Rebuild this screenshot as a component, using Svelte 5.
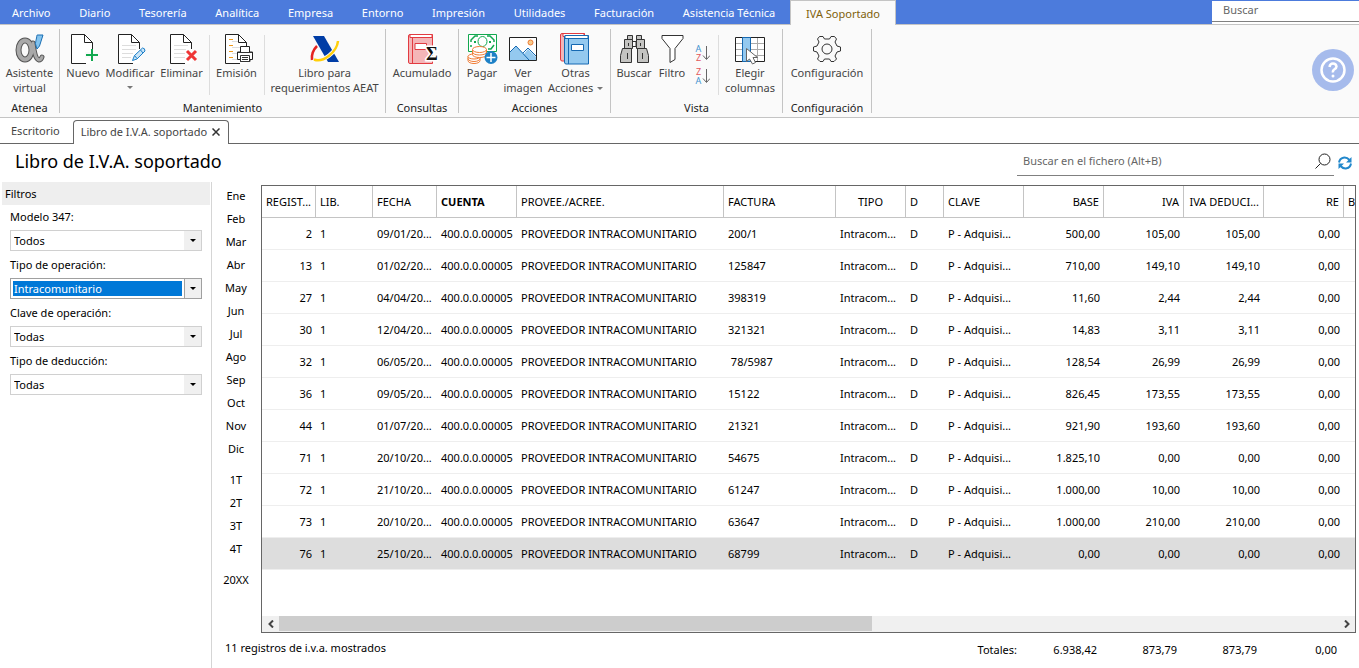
<script lang="ts">
  const menu = [
    "Archivo", "Diario", "Tesorería", "Analítica", "Empresa", "Entorno",
    "Impresión", "Utilidades", "Facturación", "Asistencia Técnica", "IVA Soportado",
  ];
  let activeMenu = $state("IVA Soportado");

  const months = ["Ene", "Feb", "Mar", "Abr", "May", "Jun", "Jul", "Ago", "Sep", "Oct", "Nov", "Dic"];
  const quarters = ["1T", "2T", "3T", "4T"];

  const filters = [
    { id: "modelo", label: "Modelo 347:", value: "Todos" },
    { id: "operacion", label: "Tipo de operación:", value: "Intracomunitario" },
    { id: "clave", label: "Clave de operación:", value: "Todas" },
    { id: "deduccion", label: "Tipo de deducción:", value: "Todas" },
  ];
  let activeFilter = $state("operacion");

  const columns = [
    { name: "REGIST...", cls: "c-reg" },
    { name: "LIB.", cls: "c-lib" },
    { name: "FECHA", cls: "c-fecha" },
    { name: "CUENTA", cls: "c-cuenta" },
    { name: "PROVEE./ACREE.", cls: "c-prov" },
    { name: "FACTURA", cls: "c-fact" },
    { name: "TIPO", cls: "c-tipo" },
    { name: "D", cls: "c-d" },
    { name: "CLAVE", cls: "c-num" },
    { name: "BASE", cls: "c-num right" },
    { name: "IVA", cls: "c-num right" },
    { name: "IVA DEDUCI...", cls: "c-num right" },
    { name: "RE", cls: "c-num right" },
    { name: "B", cls: "c-last" },
  ];

  const records = [
    { reg: 2, date: "09/01/20...", invoice: "200/1", base: "500,00", iva: "105,00" },
    { reg: 13, date: "01/02/20...", invoice: "125847", base: "710,00", iva: "149,10" },
    { reg: 27, date: "04/04/20...", invoice: "398319", base: "11,60", iva: "2,44" },
    { reg: 30, date: "12/04/20...", invoice: "321321", base: "14,83", iva: "3,11" },
    { reg: 32, date: "06/05/20...", invoice: " 78/5987", base: "128,54", iva: "26,99" },
    { reg: 36, date: "09/05/20...", invoice: "15122", base: "826,45", iva: "173,55" },
    { reg: 44, date: "01/07/20...", invoice: "21321", base: "921,90", iva: "193,60" },
    { reg: 71, date: "20/10/20...", invoice: "54675", base: "1.825,10", iva: "0,00" },
    { reg: 72, date: "21/10/20...", invoice: "61247", base: "1.000,00", iva: "10,00" },
    { reg: 73, date: "20/10/20...", invoice: "63647", base: "1.000,00", iva: "210,00" },
    { reg: 76, date: "25/10/20...", invoice: "68799", base: "0,00", iva: "0,00" },
  ];
  let selected = $state(76);
</script>

{#snippet page()}
  <path d="M4 1.5h15l7 7V30.500H4.500V1.500" fill="#fff" stroke="none" />
  <path d="M25.500 16V9.500L17.500 1.500H4.500V30.500H19M17.500 1.500V9.500H25.500" fill="none" stroke="#222" />
{/snippet}

<div class="app">
  <header class="menubar">
    <nav>
      {#each menu as item}
        <button class:active={activeMenu === item} onclick={() => (activeMenu = item)}>{item}</button>
      {/each}
    </nav>
    <input class="global-search" type="search" aria-label="Buscar" placeholder="Buscar" />
  </header>

  <div class="ribbon">
    <section class="group g-atenea">
      <div class="tools">
        <button class="tool">
          <svg viewBox="0 0 32 32" fill="none" stroke-linecap="round">
            <ellipse cx="11" cy="17" rx="6.500" ry="9.500" stroke="#555" stroke-width="6" />
            <path d="M19 10C20 17 21 26 25 27Q27 27 28 24" stroke="#555" stroke-width="5" />
            <ellipse cx="11" cy="17" rx="6.500" ry="9.500" stroke="#a9a9a9" stroke-width="4" />
            <path d="M19 10C20 17 21 26 25 27Q27 27 28 24" stroke="#a9a9a9" stroke-width="3" />
            <path d="M23.500 2h5.500l-3.500 11-2.500 3-1.500-5z" fill="#83c3ee" stroke="#1b6fb3" />
          </svg>
          <span>Asistente<br />virtual</span>
        </button>
      </div>
      <h2>Atenea</h2>
    </section>

    <section class="group g-mant">
      <div class="tools">
        <button class="tool">
          <svg viewBox="0 0 32 32">
            {@render page()}
            <path d="M18 19h14v6H18z" fill="#fafafa" />
            <path d="M25 16v12M19 22h12" stroke="#12a84f" stroke-width="2" />
          </svg>
          <span>Nuevo</span>
        </button>
        <button class="tool">
          <svg viewBox="0 0 32 32">
            {@render page()}
            <path d="M8 12.500h14M8 16.500h14M8 20.500h11M8 24.500h9" stroke="#ddd" />
            <path d="M18.500 27.500l2-5 8-7.500q2.500 0 2.500 3l-8 8zM20.500 22.500l2.500 3M26.500 17l2.500 3" fill="#c9e4f7" stroke="#1b7fc9" />
          </svg>
          <span>Modificar</span>
          <i class="caret"></i>
        </button>
        <button class="tool">
          <svg viewBox="0 0 32 32">
            {@render page()}
            <path d="M8 12.500h14M8 16.500h12M8 20.500h11M8 24.500h11" stroke="#ddd" />
            <path d="M21 18l9 9M30 18l-9 9" stroke="#fafafa" stroke-width="5" />
            <path d="M21 18l9 9M30 18l-9 9" stroke="#ef3535" stroke-width="3" />
          </svg>
          <span>Eliminar</span>
        </button>
        <button class="tool divided">
          <svg viewBox="0 0 32 32">
            {@render page()}
            <path d="M8 6.500h4M8 12.500h4M8 18.500h4M8 24.500h4" stroke="#f09a1a" />
            <path d="M11 8.500h6M11 14.500h8M11 20.500h5M11 26.500h5" stroke="#ddd" />
            <path d="M19.500 19v-5.500h9V19h3v7.500H29v2H19.500v-2h-3V19z" fill="#fff" stroke="#222" />
            <path d="M17 19.500h14M19.500 22.500h9v6h-9zM21 24.500h6M21 26.500h6" fill="#fff" stroke="#333" />
          </svg>
          <span>Emisión</span>
        </button>
        <button class="tool divided">
          <svg viewBox="0 0 32 32">
            <path d="M8 13Q2 19 3 27" fill="none" stroke="#e42320" stroke-width="2.500" />
            <path d="M4 3h11l15 26H19z" fill="#003da6" />
            <path d="M29 8C28 19 14 30 5 26.500" fill="none" stroke="#fafafa" stroke-width="4" />
            <path d="M29 8C28 19 14 30 5 26.500" fill="none" stroke="#ffcf0a" stroke-width="2.500" />
          </svg>
          <span>Libro para<br />requerimientos AEAT</span>
        </button>
      </div>
      <h2>Mantenimiento</h2>
    </section>

    <section class="group g-cons">
      <div class="tools">
        <button class="tool">
          <svg viewBox="0 0 32 32">
            <path d="M2.500 3Q2.500 1.500 4 1.500H26.500V30.500H4Q2.500 30.500 2.500 29z" fill="#f4b6b8" stroke="#e23b41" />
            <path d="M4 1.500h22v3H4z" fill="#fff" stroke="#e23b41" />
            <path d="M6.500 5v25" stroke="#e23b41" />
            <path d="M9 10.500h11.500v6H9z" fill="#fff" stroke="#e23b41" />
            <text x="20" y="27" font-family="Liberation Serif" font-size="18" font-weight="bold" fill="#111" stroke="#fff" stroke-width="3" paint-order="stroke">Σ</text>
          </svg>
          <span>Acumulado</span>
        </button>
      </div>
      <h2>Consultas</h2>
    </section>

    <section class="group g-acc">
      <div class="tools">
        <button class="tool">
          <svg viewBox="0 0 32 32">
            <path d="M2.500 1.500h28v17h-28z" fill="#fff" stroke="#12a84f" />
            <path d="M5 9V7l4-4h3M28 9V7l-4-4h-3M28 12l-3 4h-3M5 12v2" fill="none" stroke="#12a84f" stroke-width="1.500" />
            <ellipse cx="16.500" cy="8.500" rx="4.500" ry="5" fill="#fff" stroke="#12a84f" />
            <path d="M8 9h2M23 9h2" stroke="#12a84f" stroke-width="2" />
            <g fill="#fff" stroke="#ef7a33">
              <path d="M2 23.500v4c0 4 12 4 12 0v-4" />
              <ellipse cx="8" cy="23.500" rx="6" ry="2.500" />
              <path d="M2 25.500c0 4 12 4 12 0" fill="none" />
              <path d="M6.500 16.500v5c0 4 14 4 14 0v-5" />
              <ellipse cx="13.500" cy="16.500" rx="7" ry="3" />
              <path d="M6.500 19c0 4 14 4 14 0" fill="none" />
            </g>
            <circle cx="25" cy="24.500" r="6.500" fill="#1d80c6" />
            <path d="M25 20v9M20.500 24.500h9" stroke="#fff" stroke-width="1.500" />
          </svg>
          <span>Pagar</span>
        </button>
        <button class="tool">
          <svg viewBox="0 0 32 32">
            <path d="M2.500 4.500h27v23h-27z" fill="#fff" />
            <path d="M3 19l6-6 8 8 4-5 8 8v3H3z" fill="#94c9ef" />
            <path d="M3 19l6-6 13 14M16 20l5-5 8 8" fill="none" stroke="#1669b2" />
            <path d="M2.500 4.500h27v23h-27z" fill="none" stroke="#222" />
            <circle cx="23.500" cy="9.500" r="2.500" fill="#f8cc8c" stroke="#ef7a33" />
          </svg>
          <span>Ver<br />imagen</span>
        </button>
        <button class="tool">
          <svg viewBox="0 0 32 32">
            <path d="M.500 2Q.500.500 2 .500H24.500V28H2Q.500 28 .500 26z" fill="#f4b6b8" stroke="#e23b41" />
            <path d="M3 .500h21v3H3z" fill="#fff" stroke="#e23b41" />
            <path d="M4.500 4Q4.500 2.500 6 2.500H28.500V31H6Q4.500 31 4.500 29z" fill="#94c9ef" stroke="#1669b2" />
            <path d="M5 2.500h23v3H5z" fill="#fff" stroke="#1669b2" />
            <path d="M8.500 6v25" stroke="#1669b2" />
            <path d="M11.500 11.500h12v6h-12z" fill="#fff" stroke="#1669b2" />
          </svg>
          <span>Otras<br />Acciones <i class="caret inline"></i></span>
        </button>
      </div>
      <h2>Acciones</h2>
    </section>

    <section class="group g-vista">
      <div class="tools">
        <button class="tool">
          <svg viewBox="0 0 32 32" fill="#c4c4c2" stroke="#333">
            <path d="M14 8.500h4v5h-4z" fill="#fff" />
            <path d="M9.500 2.500h5v4h-5zM18.500 2.500h5v4h-5z" />
            <path d="M6.500 6.500h8v9h-8zM18.500 6.500h8v9h-8z" />
            <path d="M4.500 15.500h9v14h-11v-7zM19.500 15.500h9l2 7v7h-11z" />
            <path d="M9.500 20v6M24.500 20v6M10.500 10v3M22.500 10v3" />
          </svg>
          <span>Buscar</span>
        </button>
        <button class="tool">
          <svg viewBox="0 0 32 32">
            <path d="M6 2.500h21v3l-8 10v11l-5 3v-14l-8-10z" fill="#fff" stroke="#333" />
          </svg>
          <span>Filtro</span>
        </button>
        <div class="sorts">
          {#each [["A", "Z"], ["Z", "A"]] as [top, bottom]}
            <button aria-label="Ordenar {top}-{bottom}">
              <span class="letters"><b class={top}>{top}</b><b class={bottom}>{bottom}</b></span>
              <svg viewBox="0 0 8 16"><path d="M4.500 1v13M1 10.500l3.500 4 3.500-4" fill="none" stroke="#666" /></svg>
            </button>
          {/each}
        </div>
        <button class="tool divided">
          <svg viewBox="0 0 32 32">
            <path d="M1.500 4.500h29v24h-29z" fill="#fff" />
            <path d="M1 10.500h30M1 16.500h30M1 22.500h30M23.500 4v25" stroke="#aaa" />
            <path d="M1.500 4.500h29v24h-29z" fill="none" stroke="#222" />
            <path d="M8.500 4.500h8v24h-8z" fill="#94c9ef" stroke="#1669b2" />
            <path d="M12.500 15.500v13l3-2.500 3 5 3-1.500-2.500-5h4.500z" fill="#fff" stroke="#666" />
          </svg>
          <span>Elegir<br />columnas</span>
        </button>
      </div>
      <h2>Vista</h2>
    </section>

    <section class="group g-conf">
      <div class="tools">
        <button class="tool">
          <svg viewBox="0 0 32 32" fill="none" stroke="#333" stroke-linejoin="round">
            <path d="M8.500 3.500L12 3.500L13.500 6H18.500L20 3.500L23.500 3.500L25.500 6L24 9L26 13L29.500 14V18L26 19L24 23L25.500 26L23 28.500H20L18.500 26H13.500L12 28.500H9L6.500 26L8 23L6 19L2.500 18V14L6 13L8 9L6.500 6z" />
            <circle cx="16" cy="16" r="5" />
          </svg>
          <span>Configuración</span>
        </button>
      </div>
      <h2>Configuración</h2>
    </section>

    <button class="help" aria-label="Ayuda">
      <svg viewBox="0 0 42 42">
        <circle cx="21" cy="21" r="21" fill="#a6bbec" />
        <circle cx="21" cy="21" r="11.500" fill="none" stroke="#fff" stroke-width="2.500" />
        <path d="M17.500 18q.500-3.500 3.500-3.500t3.500 3q0 1.500-2 2.700T21 23.500" fill="none" stroke="#fff" stroke-width="2.500" />
        <circle cx="21" cy="27" r="1.500" fill="#fff" />
      </svg>
    </button>
  </div>

  <div class="doc-tabs">
    <button class="doc-tab">Escritorio</button>
    <div class="doc-tab current">
      <span>Libro de I.V.A. soportado</span>
      <button aria-label="Cerrar">
        <svg viewBox="0 0 8 8"><path d="M.500.500l7 7M7.500.500l-7 7" stroke="#333" stroke-width="1.500" /></svg>
      </button>
    </div>
  </div>

  <div class="title-bar">
    <h1>Libro de I.V.A. soportado</h1>
    <div class="file-search">
      <input type="text" aria-label="Buscar en el fichero" placeholder="Buscar en el fichero (Alt+B)" />
      <svg viewBox="0 0 16 16" fill="none" stroke="#222"><circle cx="9.500" cy="6.500" r="5.500" /><path d="M5.500 10.500L.500 15.500" /></svg>
    </div>
    <button class="refresh" aria-label="Actualizar">
      <svg viewBox="0 0 14 14">
        <path d="M1 6.500C2 1 8 0 11.500 4M13 7.500C12 13 6 14 2.500 10" fill="none" stroke="#2288cc" stroke-width="2" />
        <path d="M13.500 1v5.500H8zM.500 13V7.500H6z" fill="#2288cc" />
      </svg>
    </button>
  </div>

  <main>
    <aside>
      <h3>Filtros</h3>
      <div class="fields">
        {#each filters as filter}
          <div class="field">
            <label for={filter.id}>{filter.label}</label>
            <div class="combo" class:focused={activeFilter === filter.id}>
              <select id={filter.id} onfocus={() => (activeFilter = filter.id)}>
                <option>{filter.value}</option>
              </select>
              <span class="arrow"><i></i></span>
            </div>
          </div>
        {/each}
      </div>
    </aside>

    <nav class="periods">
      <div>{#each months as month}<button>{month}</button>{/each}</div>
      <div>{#each quarters as quarter}<button>{quarter}</button>{/each}</div>
      <div><button>20XX</button></div>
    </nav>

    <section class="content">
      <div class="grid-box">
        <div class="rows">
          <table>
            <thead>
              <tr>
                {#each columns as column}<th class={column.cls}>{column.name}</th>{/each}
              </tr>
            </thead>
            <tbody>
              {#each records as r}
                <tr class:selected={selected === r.reg} onclick={() => (selected = r.reg)}>
                  <td class="right">{r.reg}</td>
                  <td>1</td>
                  <td>{r.date}</td>
                  <td>400.0.0.00005</td>
                  <td>PROVEEDOR INTRACOMUNITARIO</td>
                  <td class="invoice">{r.invoice}</td>
                  <td>Intracom...</td>
                  <td>D</td>
                  <td>P - Adquisi...</td>
                  <td class="right">{r.base}</td>
                  <td class="right">{r.iva}</td>
                  <td class="right">{r.iva}</td>
                  <td class="right">0,00</td>
                  <td></td>
                </tr>
              {/each}
            </tbody>
          </table>
        </div>
        <div class="scrollbar">
          <button aria-label="Izquierda"><svg viewBox="0 0 8 8"><path d="M6 .500L2.500 4 6 7.500" /></svg></button>
          <div class="track"><div class="thumb"></div></div>
          <button aria-label="Derecha"><svg viewBox="0 0 8 8"><path d="M2 .500L5.500 4 2 7.500" /></svg></button>
        </div>
      </div>
      <footer>
        <span class="status">11 registros de i.v.a. mostrados</span>
        <div class="totals">
          <span>Totales:</span>
          <span>6.938,42</span>
          <span>873,79</span>
          <span>873,79</span>
          <span>0,00</span>
        </div>
      </footer>
    </section>
  </main>
</div>

<style>
  :global(body) {
    margin: 0;
    background: #fff;
  }

  * {
    box-sizing: border-box;
  }

  .app {
    display: flex;
    flex-direction: column;
    min-height: 100vh;
    overflow: hidden;
    font-family: "Noto Sans", "Open Sans", sans-serif;
    font-size: 11px;
    color: #000;
  }

  button, input, select {
    font: inherit;
    color: inherit;
    margin: 0;
    padding: 0;
    border: 0;
    background: none;
    border-radius: 0;
    outline: none;
  }

  svg {
    display: block;
    flex: none;
  }

  h1, h2, h3 {
    margin: 0;
    font-weight: normal;
  }

  /* menu */
  .menubar {
    display: flex;
    justify-content: space-between;
    height: 25px;
    background: #4c7bdc;
    border-bottom: 1px solid #c4c4c4;
  }

  .menubar nav {
    display: flex;
    justify-content: space-between;
    width: 896px;
  }

  .menubar nav button {
    height: 24px;
    padding: 0 14px;
    color: #fff;
    white-space: nowrap;
  }

  .menubar nav button:first-child {
    padding-left: 12px;
  }

  .menubar nav button.active {
    height: 25px;
    padding: 0 15px;
    background: #fafafa;
    border: 1px solid #c4c4c4;
    border-bottom: 0;
    color: #80610b;
  }

  .global-search {
    width: 147px;
    height: 21px;
    margin-top: 1px;
    padding: 0 11px 3px;
    background: #fff;
    border-bottom: 1px solid #808080;
    box-shadow: 0 2px #fff;
  }

  input::placeholder {
    color: #666;
    opacity: 1;
  }

  /* ribbon */
  .ribbon {
    display: flex;
    height: 93px;
    padding: 4px 0;
    background: #fafafa;
    border-bottom: 1px solid #c4c4c4;
    color: #444;
  }

  .group {
    display: flex;
    flex-direction: column;
    border-right: 1px solid #c4c4c4;
  }

  .group h2 {
    margin-top: 6px;
    font-size: 11px;
    line-height: 12px;
    text-align: center;
    color: #222;
  }

  .tools {
    display: grid;
    flex: none;
    height: 67px;
    padding-top: 4px;
  }

  .g-atenea .tools { grid-template-columns: 59px; }
  .g-mant .tools { grid-template-columns: 46px 48px 55px 55px 121px; }
  .g-cons .tools { grid-template-columns: 72px; }
  .g-acc .tools { grid-template-columns: 46px 36px 69px; }
  .g-vista .tools { grid-template-columns: 46px 30px 31px 64px; }
  .g-conf .tools { grid-template-columns: 88px; }

  .tool {
    display: flex;
    flex-direction: column;
    align-items: center;
    line-height: 15px;
    white-space: nowrap;
  }

  .tool > svg {
    width: 32px;
    height: 32px;
    overflow: visible;
  }

  .tool.divided {
    background: linear-gradient(#ddd, #ddd) left 2px / 1px 60px no-repeat;
  }

  .caret {
    width: 0;
    margin-top: 6px;
    border: 3px solid transparent;
    border-top-color: #777;
    border-bottom: 0;
  }

  .caret.inline {
    display: inline-block;
    margin: 0 0 2px 1px;
  }

  .sorts {
    display: flex;
    flex-direction: column;
    align-items: center;
    gap: 5px;
    padding-top: 11px;
  }

  .sorts button {
    display: flex;
    align-items: center;
    height: 18px;
  }

  .sorts svg {
    width: 8px;
    height: 16px;
  }

  .letters {
    display: flex;
    flex-direction: column;
    font-size: 9px;
    line-height: 9px;
  }

  .letters b {
    width: 7px;
    font-weight: normal;
  }

  .A { color: #3f93cf; }
  .Z { color: #e2565b; }

  .help {
    align-self: flex-start;
    margin: 20px 5px 0 auto;
  }

  .help svg {
    width: 42px;
    height: 42px;
  }

  /* document tabs */
  .doc-tabs {
    display: flex;
    align-items: flex-end;
    height: 26px;
    border-bottom: 1px solid #666;
    color: #444;
  }

  .doc-tab {
    height: 24px;
    padding: 0 13px 1px 11px;
  }

  .doc-tab.current {
    display: flex;
    align-items: center;
    gap: 5px;
    height: 24px;
    margin-bottom: -1px;
    padding: 0 8px 2px 7px;
    background: #fff;
    border: 1px solid #666;
    border-bottom: 0;
    border-radius: 4px 4px 0 0;
  }

  .doc-tab svg {
    width: 8px;
    height: 8px;
  }

  /* title */
  .title-bar {
    display: flex;
    align-items: center;
    height: 38px;
    padding-right: 7px;
  }

  h1 {
    flex: 1;
    padding: 0 0 4px 15px;
    font-size: 18px;
    line-height: 30px;
  }

  .file-search {
    display: flex;
    align-items: center;
    width: 317px;
    height: 28px;
    margin: 0 4px 2px 0;
    padding: 0 3px 2px 6px;
    border-bottom: 1px solid #808080;
  }

  .file-search input {
    flex: 1;
  }

  .file-search svg {
    width: 16px;
    height: 16px;
  }

  .refresh svg {
    width: 14px;
    height: 14px;
  }

  /* filters */
  main {
    display: flex;
    flex: 1;
  }

  aside {
    width: 212px;
    padding: 0 1px 0 2px;
    border-right: 1px solid #d5d5d5;
  }

  h3 {
    padding-left: 3px;
    background: #eee;
    font-size: 11px;
    line-height: 23px;
  }

  .fields {
    display: flex;
    flex-direction: column;
    gap: 5px;
    padding: 3px 8px;
  }

  .field label {
    display: block;
    height: 22px;
    line-height: 18px;
  }

  .combo {
    display: flex;
    height: 21px;
    border: 1px solid #d0d0d0;
  }

  .combo select {
    flex: 1;
    margin: 2px;
    padding-left: 1px;
    appearance: none;
  }

  .arrow {
    display: flex;
    align-items: center;
    justify-content: center;
    width: 17px;
    background: #f0f0f0;
  }

  .arrow i {
    border: 3px solid transparent;
    border-top-color: #000;
    border-bottom: 0;
  }

  .combo.focused {
    border-color: #a0a0a0;
  }

  .combo.focused select {
    background: #0078d7;
    color: #fff;
  }

  .combo.focused .arrow {
    border-left: 1px solid #a0a0a0;
  }

  /* months */
  .periods {
    display: flex;
    flex-direction: column;
    gap: 8px;
    width: 49px;
    padding: 2px 1px 0 0;
  }

  .periods button {
    display: block;
    width: 100%;
    height: 23px;
    text-align: center;
  }

  /* records */
  .content {
    display: flex;
    flex: 1;
    flex-direction: column;
    min-width: 0;
    padding: 3px 3px 0 0;
  }

  .grid-box {
    display: flex;
    flex: 1;
    flex-direction: column;
    border: 1px solid #666;
  }

  .rows {
    flex: 1;
    overflow: hidden;
  }

  table {
    width: 100%;
    table-layout: fixed;
    border-collapse: separate;
    border-spacing: 0;
  }

  th, td {
    height: 32px;
    padding: 0 4px;
    overflow: hidden;
    text-align: left;
    white-space: nowrap;
    font-weight: normal;
    border-bottom: 1px solid #eee;
  }

  th {
    border-right: 1px solid #c4c4c4;
    border-bottom-color: #c4c4c4;
  }

  .invoice {
    white-space: pre;
  }

  th.c-last {
    padding-right: 0;
    border-right: 0;
  }

  .c-reg { width: 54px; }
  .c-lib { width: 57px; }
  .c-fecha { width: 64px; }
  .c-cuenta { width: 80px; font-weight: bold; }
  .c-prov { width: 207px; }
  .c-fact { width: 112px; }
  .c-tipo { width: 70px; text-align: center; }
  .c-d { width: 38px; }
  .c-num { width: 80px; }

  .right {
    text-align: right;
  }

  .selected td {
    background: #ddd;
  }

  .scrollbar {
    display: flex;
    height: 16px;
    background: #f0f0f0;
  }

  .scrollbar button {
    display: flex;
    align-items: center;
    justify-content: center;
    width: 17px;
  }

  .scrollbar svg {
    width: 8px;
    height: 8px;
    fill: none;
    stroke: #444;
    stroke-width: 2;
  }

  .track {
    flex: 1;
  }

  .thumb {
    width: 56%;
    height: 15px;
    background: #cdcdcd;
  }

  footer {
    display: flex;
    align-items: center;
    justify-content: space-between;
    height: 35px;
    padding: 0 19px 6px 0;
  }

  .status {
    margin-left: -36px;
  }

  .totals {
    display: flex;
    padding-top: 3px;
  }

  .totals span + span {
    width: 80px;
    text-align: right;
  }
</style>
